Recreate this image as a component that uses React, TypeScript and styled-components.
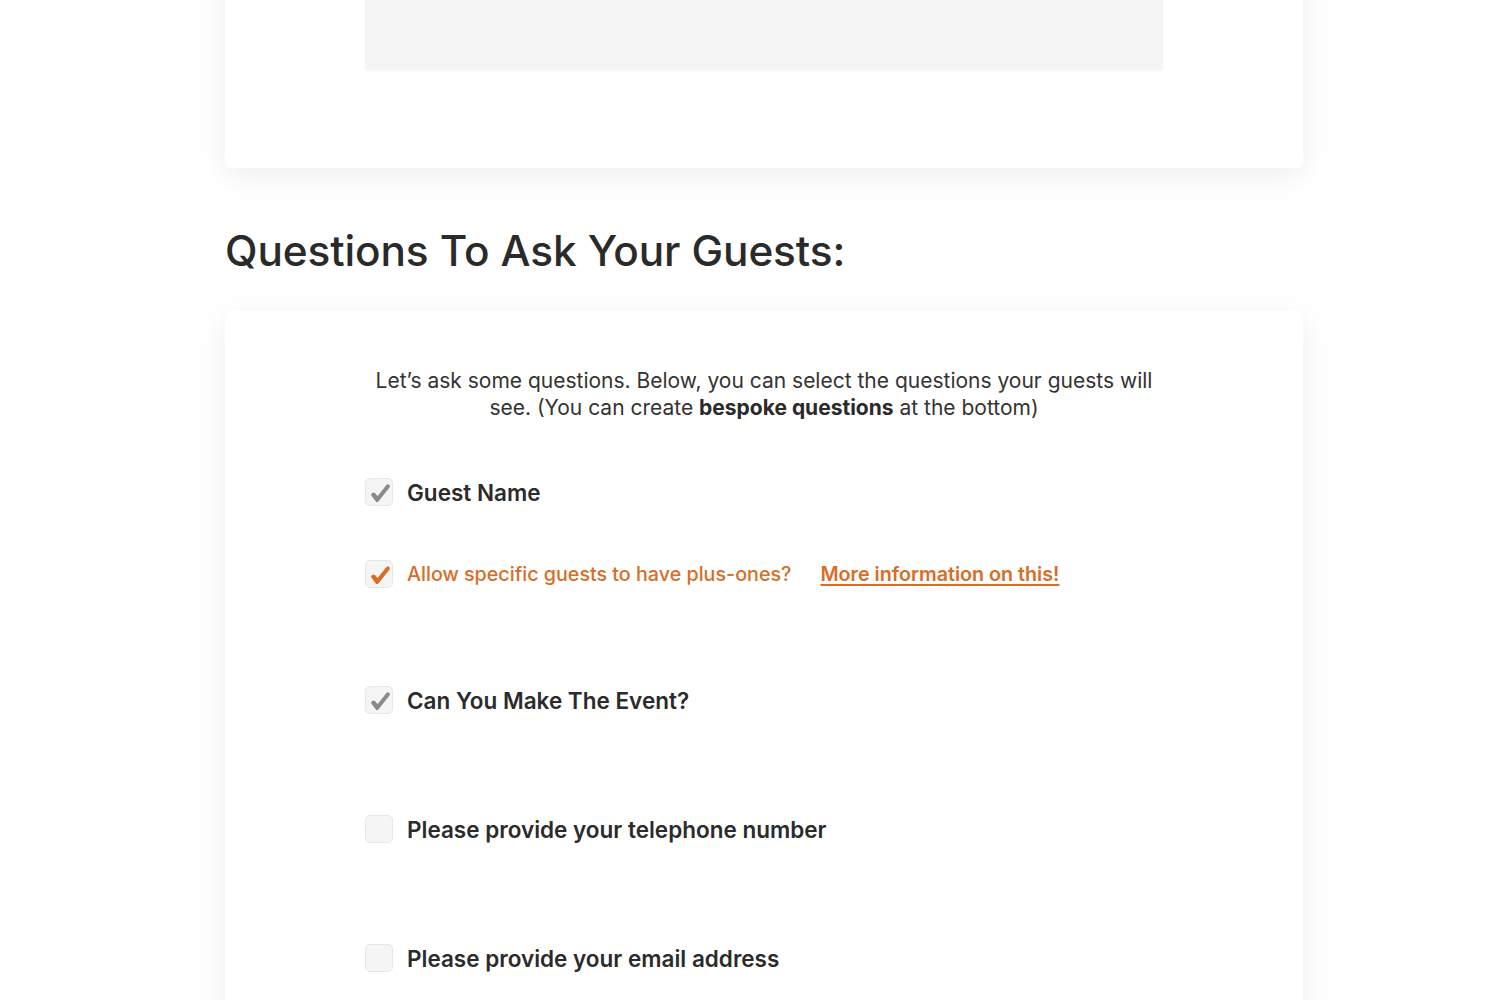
import React from "react";
import styled, { createGlobalStyle } from "styled-components";

const Global = createGlobalStyle`
  html, body { margin: 0; padding: 0; background: #ffffff; }
  body { font-family: Inter, "Noto Sans", "Liberation Sans", sans-serif; color: #2b2b2b; }
`;

const Page = styled.main`
  width: 1078px;
  margin: -100px 0 0 225px;
  display: flex;
  flex-direction: column;
`;

const Card = styled.section`
  background: #ffffff;
  border-radius: 6px;
  box-shadow: 0 8px 32px rgba(0, 0, 0, 0.07);
  display: flex;
  flex-direction: column;
  align-items: center;
`;

const TopCard = styled(Card)`
  padding: 40px 140px 98px;
`;

const Placeholder = styled.div`
  width: 798px;
  height: 130px;
  background: #f5f5f5;
  border-radius: 4px;
  box-shadow: 0 1px 2px rgba(0, 0, 0, 0.04);
`;

const Heading = styled.h2`
  margin: 57px 0 34px;
  font-size: 42.3px;
  font-weight: 500;
  line-height: 52px;
  letter-spacing: -0.1px;
  color: #2a2a2a;
`;

const QuestionsCard = styled(Card)`
  padding: 56px 140px 80px;
`;

const Intro = styled.p`
  margin: 0 0 57px;
  width: 798px;
  text-align: center;
  font-size: 21px;
  line-height: 27px;
  color: #333333;
  b { font-weight: 700; color: #2a2a2a; }
`;

const List = styled.div`
  width: 798px;
  display: flex;
  flex-direction: column;
`;

const Row = styled.label<{ $after: number }>`
  display: flex;
  align-items: center;
  gap: 14px;
  height: 28px;
  margin-bottom: ${(p) => p.$after}px;
`;

const Box = styled.span<{ $tone?: "gray" | "orange" }>`
  width: 28px;
  height: 28px;
  box-sizing: border-box;
  border: 1px solid #e7e7e7;
  border-radius: 5px;
  background: #f5f5f5;
  display: flex;
  align-items: center;
  justify-content: center;
  flex: none;
  color: ${(p) => (p.$tone === "orange" ? "#d76e28" : "#8a8a8a")};
  svg { width: 24px; height: 24px; margin: 2px 0 0 1px; display: block; }
`;

const Label = styled.span<{ $accent?: boolean }>`
  font-size: ${(p) => (p.$accent ? "19.7px" : "22.5px")};
  font-weight: ${(p) => (p.$accent ? 500 : 600)};
  color: ${(p) => (p.$accent ? "#d76e28" : "#2b2b2b")};
`;

const Link = styled.a`
  margin-left: 15px;
  font-size: 19.7px;
  font-weight: 600;
  color: #d76e28;
  text-decoration: underline;
  text-underline-offset: 3px;
  text-decoration-thickness: 2px;
`;

const Check = () => (
  <svg viewBox="0 0 24 24" aria-hidden="true">
    <path
      d="M5.4 13.8 L9.2 18.8 L19.8 5.4"
      fill="none"
      stroke="currentColor"
      strokeWidth="4"
      strokeLinecap="round"
      strokeLinejoin="round"
    />
    <path
      fill="currentColor"
      d="M3 13.6 C4.4 11 6.8 11.2 8.2 13.4 L10.4 16.6 L8.8 21.4 C7 19.2 5 16.4 3 13.6 Z"
    />
  </svg>
);

type Q = { text: string; checked?: boolean; accent?: boolean; after: number; link?: string };

const questions: Q[] = [
  { text: "Guest Name", checked: true, after: 54 },
  { text: "Allow specific guests to have plus-ones?", checked: true, accent: true, after: 98, link: "More information on this!" },
  { text: "Can You Make The Event?", checked: true, after: 101 },
  { text: "Please provide your telephone number", after: 101 },
  { text: "Please provide your email address", after: 60 },
];

export default function App() {
  return (
    <>
      <Global />
      <Page>
        <TopCard>
          <Placeholder />
        </TopCard>
        <Heading>Questions To Ask Your Guests:</Heading>
        <QuestionsCard>
          <Intro>
            Let’s ask some questions. Below, you can select the questions your guests will
            see. (You can create <b>bespoke questions</b> at the bottom)
          </Intro>
          <List>
            {questions.map((q) => (
              <Row key={q.text} $after={q.after}>
                <Box $tone={q.accent ? "orange" : "gray"}>{q.checked && <Check />}</Box>
                <Label $accent={q.accent}>{q.text}</Label>
                {q.link && <Link href="#">{q.link}</Link>}
              </Row>
            ))}
          </List>
        </QuestionsCard>
      </Page>
    </>
  );
}
